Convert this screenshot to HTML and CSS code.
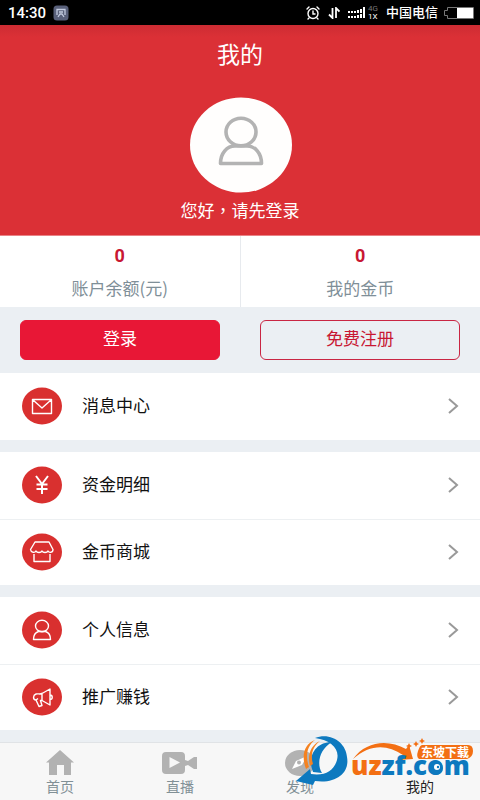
FILE: index.html
```html
<!DOCTYPE html>
<html lang="zh-CN">
<head>
<meta charset="utf-8">
<meta name="viewport" content="width=device-width, initial-scale=1">
<title>我的</title>
<link rel="stylesheet" href="styles.css">
</head>
<body>
<div class="app">
  <div class="status">
    <span class="clock">14:30</span>
    <svg class="app-badge" width="16" height="16" viewBox="0 0 16 16"><rect x=".5" y=".5" width="15" height="15" rx="3.500" fill="#59607a"/><path d="M4 10V4.500h8V10M5 12l2-3h2l2 3M6 7h4" fill="none" stroke="#c3cbe0" stroke-width="1.300"/></svg>
    <span class="spacer"></span>
    <svg width="14" height="14" viewBox="0 0 14 14" fill="none" stroke="#fff" stroke-width="1.400" stroke-linecap="round"><circle cx="7" cy="7.500" r="5"/><path d="M7 5v3h2M1 3l2-2M13 3l-2-2M3 12l-1 1M11 12l1 1"/></svg>
    <svg class="arrows" width="12" height="12" viewBox="0 0 12 12" fill="none" stroke="#fff" stroke-width="1.800"><path d="M4.500 1v10L1 7.500M8 11V1l3.500 3.500"/></svg>
    <svg class="signal" width="18" height="12" viewBox="0 0 18 12" fill="#fff"><path d="M0 4h2v2H0zM3 4h2v2H3zM6 4h2v2H6zM9 3h2v3H9zM12 2h2v4h-2zM15 0h2v6h-2zM0 9h2v2H0zM3 9h2v2H3zM6 9h2v2H6zM9 8h2v3H9zM12 7h2v4h-2zM15 6h2v5h-2z"/></svg>
    <span class="net"><span class="net-off">4G</span><span>1X</span></span>
    <span class="carrier">中国电信</span>
    <svg class="battery" width="30" height="12" viewBox="0 0 30 12"><path d="M3.500.5h26v11h-26V8.500h-3v-5h3z" fill="none" stroke="#777"/><path d="M13 1h16v10H13z" fill="#fff"/></svg>
  </div>

  <header class="profile">
    <h1>我的</h1>
    <svg class="avatar" width="104" height="96" viewBox="0 0 104 96"><ellipse cx="53" cy="48" rx="51" ry="47.500" fill="#fffefd"/><g fill="none" stroke="#b3b3b3" stroke-width="3.600"><ellipse cx="53" cy="35" rx="15" ry="13.800"/><path d="M32.500 66.500h41C73.500 56 67 49 59 49H47c-8 0-14.500 7-14.500 17.500z" stroke-linejoin="round"/></g></svg>
    <p>您好<span class="comma" lang="zh-TW">，</span>请先登录</p>
  </header>

  <section class="stats">
    <div class="stat"><strong>0</strong><span>账户余额(元)</span></div>
    <div class="stat"><strong>0</strong><span>我的金币</span></div>
  </section>

  <div class="actions">
    <button class="btn btn-solid" type="button">登录</button>
    <button class="btn btn-line" type="button">免费注册</button>
  </div>

  <main class="menu">
    <div class="group">
      <a class="row" href="#message">
        <svg class="icon" viewBox="0 0 40 38"><ellipse class="disc" cx="20" cy="19" rx="20" ry="18.500"/><path d="M10.500 12.500h19v14h-19zM11 13l9 8 9-8"/></svg>
        <span>消息中心</span>
        <svg class="chevron" viewBox="0 0 12 18"><path d="M2 2l8 7-8 7"/></svg>
      </a>
    </div>
    <div class="group">
      <a class="row" href="#funds">
        <svg class="icon" viewBox="0 0 40 38"><ellipse class="disc" cx="20" cy="19" rx="20" ry="18.500"/><path class="bold" d="M14 10l6 8 6-8M20 18v10M14.500 18.500h11M14.500 23h11"/></svg>
        <span>资金明细</span>
        <svg class="chevron" viewBox="0 0 12 18"><path d="M2 2l8 7-8 7"/></svg>
      </a>
      <a class="row" href="#mall">
        <svg class="icon" viewBox="0 0 40 38"><ellipse class="disc" cx="20" cy="19" rx="20" ry="18.500"/><path d="M13 9h14l4 7.500c0 3.500-4 3.500-5 1.500-1 2-5 2-6 0-1 2-5 2-6 0-1 2-5 2-5.500-1.500zM12 21v7.500h16V21"/></svg>
        <span>金币商城</span>
        <svg class="chevron" viewBox="0 0 12 18"><path d="M2 2l8 7-8 7"/></svg>
      </a>
    </div>
    <div class="group">
      <a class="row" href="#info">
        <svg class="icon" viewBox="0 0 40 38"><ellipse class="disc" cx="20" cy="19" rx="20" ry="18.500"/><ellipse cx="20" cy="15" rx="6.500" ry="5.700"/><path d="M11.500 28.500h17c0-4-2-7-5-8h-7c-3 1-5 4-5 8z"/></svg>
        <span>个人信息</span>
        <svg class="chevron" viewBox="0 0 12 18"><path d="M2 2l8 7-8 7"/></svg>
      </a>
      <a class="row" href="#promote">
        <svg class="icon" viewBox="0 0 40 38"><ellipse class="disc" cx="20" cy="19" rx="20" ry="18.500"/><path d="M20 15.500l8-4.500v16l-8-4.500M20 15.500c-2 1-4 0-6 .5-3 1-3.500 5.500 0 6l3 6.500 3-1-1.500-5 1.500 0zM14 22l2-1.500M28 17c3 0 3 4.500 0 4.500"/></svg>
        <span>推广赚钱</span>
        <svg class="chevron" viewBox="0 0 12 18"><path d="M2 2l8 7-8 7"/></svg>
      </a>
    </div>
  </main>

  <nav class="tabs">
    <a href="#home"><svg width="28" height="26" viewBox="0 0 28 26"><path d="M14 0l14 12.500h-3V25h-7V15h-7v10H3V12.500H0z"/></svg><span>首页</span></a>
    <a href="#live"><svg width="36" height="26" viewBox="0 0 36 26"><path fill-rule="evenodd" d="M4 2h15q4 0 4 4v4l3 1 6-4h3v12h-3l-6-4-3 1v4q0 4-4 4H4q-4 0-4-4V6q0-4 4-4zm3.500 5v11L18 12.500z"/></svg><span>直播</span></a>
    <a href="#find"><svg width="30" height="26" viewBox="0 0 30 26"><ellipse cx="15" cy="13" rx="15" ry="13"/><path d="M7 19l4-8 11-5-5 9z" fill="#fff"/><circle cx="14" cy="12.500" r="2"/></svg><span>发现</span></a>
    <a class="current" href="#mine"><i class="icon-space"></i><span>我的</span></a>
    <svg class="watermark" width="184" height="54" viewBox="0 0 184 54">
      <path d="M19 4C35-2 50 9 51 23c3 16-11 27-32 24l-2 4-17-4 14-12 1 5c14 2 23-3 26-14C44 15 35 6 19 4z" fill="#0d79bf"/>
      <path d="M36 8C19 8 11 23 17 38l9 1C20 29 24 15 36 8z" fill="#0d79bf"/>
      <path d="M19 6C8 10 5 22 10 35l3-2C9 22 11 12 19 6zM24 7C15 11 11 21 14 32l3-2C14 21 17 12 24 7z" fill="#f58220"/>
      <path d="M57 25C70 7 92 5 110 15l3-4 4 14-14 1 4-5C91 10 74 10 57 25z" fill="#f36f13"/>
      <text class="wm-name" x="55" y="41"><tspan fill="#f36f13">uz</tspan><tspan fill="#0d79bf">zf.com</tspan></text>
      <circle cx="140" cy="34" r="7" fill="#0d79bf"/><circle cx="141" cy="33" r="3" fill="#fff"/><circle cx="142" cy="33" r="1.200" fill="#0d79bf"/>
      <path d="M126 11h46q5 0 5 6t-6 8h-48q-3-2-1-8t4-6z" fill="#f36f13"/>
      <text class="wm-tag" x="125" y="23">东坡下载</text>
      <path d="M120 7l1 2 2 1-2 1-1 2-1-2-2-1 2-1zM126 4l1 2 2 1-2 1-1 2-1-2-2-1 2-1zM113 9l1 2 2 1-2 1-1 2-1-2-2-1 2-1z" fill="#f36f13"/>
    </svg>
  </nav>
</div>
</body>
</html>
```
FILE: styles.css
```css
* { box-sizing: border-box; }
body { margin: 0; background: #ebeff3; color: #111; font: 17px/24px "Noto Sans CJK SC", sans-serif; }
a { color: inherit; text-decoration: none; }
h1, p { margin: 0; font-weight: 400; }
.app { display: flex; flex-direction: column; min-height: 100vh; }

.status { display: flex; align-items: center; height: 25px; padding: 0 6px 0 8px; background: #000; color: #fff; }
.clock { font: 500 15px/24px Roboto, sans-serif; }
.app-badge { margin-left: 7px; }
.spacer { flex: 1; }
.arrows { margin-left: 8px; }
.signal { margin-left: 8px; }
.net { display: flex; flex-direction: column; margin: 0 8px 0 2px; font: 8px/8px Roboto, sans-serif; }
.net-off { color: #777; }
.carrier { font-size: 13px; font-weight: 500; line-height: 22px; padding-bottom: 2px; }
.battery { margin-left: 6px; }

.profile { display: flex; flex-direction: column; align-items: center; height: 211px; padding-top: 12px; background: linear-gradient(#cd2c33, #db3036 12px); border-bottom: 1px solid #e98286; color: #fff; }
.profile h1 { font-size: 23px; line-height: 32px; }
.avatar { margin: 28px 0 5px; }
.comma { font-family: "Noto Sans CJK TC", sans-serif; }

.stats { display: flex; height: 71px; background: #fff; }
.stat { flex: 1; display: flex; flex-direction: column; align-items: center; gap: 8px; padding-top: 8px; color: #7f8f98; }
.stat + .stat { border-left: 1px solid #e7eaee; }
.stat strong { color: #c81733; font: 700 18px/24px Roboto, sans-serif; }

.actions { display: flex; gap: 40px; padding: 13px 20px; }
.btn { flex: 1; height: 40px; padding: 0 0 4px; border: 1px solid #e81736; border-radius: 6px; font: inherit; }
.btn-solid { background: #e81736; color: #fff; }
.btn-line { border-color: #c92643; background: transparent; color: #c81733; }

.menu { display: flex; flex-direction: column; gap: 12px; }
.group { background: #fff; }
.row { display: flex; align-items: center; gap: 20px; height: 66px; padding: 0 21px 2px 22px; }
.group .row:first-child { height: 67px; }
.row + .row { border-top: 1px solid #edf0f2; }
.row span { flex: 1; padding-bottom: 1px; }
.icon { width: 40px; height: 38px; fill: none; stroke: #fff; stroke-width: 1.4px; stroke-linejoin: round; }
.icon .disc { fill: #d9302f; stroke: none; }
.icon .bold { stroke-width: 2px; }
.chevron { width: 12px; height: 18px; fill: none; stroke: #999; stroke-width: 2px; }

.tabs { position: relative; display: flex; height: 58px; margin-top: auto; padding-top: 7px; border-top: 1px solid #e0e3e6; background: #f7f7f7; color: #819096; font-size: 14px; line-height: 20px; }
.tabs a { flex: 1; display: flex; flex-direction: column; align-items: center; }
.tabs a svg { fill: #b2b2b2; }
.icon-space { height: 26px; }
.tabs .current { color: #222; }
.watermark { position: absolute; right: 0; bottom: 12px; }
.wm-name { font: 800 26px "Open Sans", sans-serif; }
.wm-tag { font: 700 12px "Noto Sans CJK SC", sans-serif; fill: #fff; }
```
